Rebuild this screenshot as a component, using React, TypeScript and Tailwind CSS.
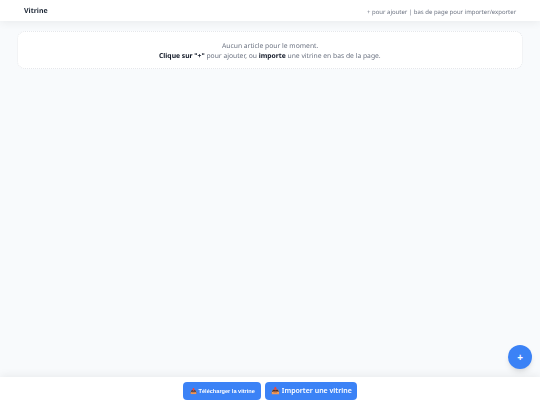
export default function App() {
  return (
    <div className="h-[405px] w-[540px] overflow-hidden relative flex flex-col bg-[#f8fafc] font-['Noto_Sans',sans-serif] text-[#111827] antialiased [text-rendering:geometricPrecision]">
      <header className="h-[21px] shrink-0 bg-white shadow-[0_2px_8px_rgba(0,0,0,0.06)] flex items-center justify-between px-6 pt-[3px] z-10">
        <h1 className="text-[7px] font-bold text-[#1f2937] will-change-transform">Vitrine</h1>
        <p className="text-[6px] text-[#6b7280] will-change-transform">+ pour ajouter | bas de page pour importer/exporter</p>
      </header>

      <main className="flex-1 px-[17px] pt-[10px]">
        <div className="h-[38px] rounded-lg bg-white border border-dotted border-[#e5e7eb] flex flex-col items-center justify-center pt-px text-[6.75px] leading-[10px] text-[#6b7280]">
          <p className="will-change-transform">Aucun article pour le moment.</p>
          <p className="will-change-transform">
            <strong className="text-[#111827]">Clique sur "+"</strong> pour ajouter, ou <strong className="text-[#111827]">importe</strong> une vitrine en bas de la page.
          </p>
        </div>
      </main>

      <button className="absolute right-2 bottom-9 w-6 h-6 rounded-full bg-[#3b82f6] text-white text-[10px] font-bold flex items-center justify-center shadow-md">+</button>

      <footer className="h-[28px] shrink-0 bg-white shadow-[0_-2px_8px_rgba(0,0,0,0.06)] flex items-center justify-center gap-1 z-10">
        <button className="w-[78px] h-[18px] rounded bg-[#3b82f6] text-white text-[5.6px] font-bold font-['Liberation_Sans',sans-serif] flex items-center justify-center">
          <span className="will-change-transform">📥 Télécharger la vitrine</span>
        </button>
        <button className="w-[92px] h-[18px] rounded bg-[#3b82f6] text-white text-[7px] font-semibold flex items-center justify-center">
          <span className="will-change-transform">📥 Importer une vitrine</span>
        </button>
      </footer>
    </div>
  );
}
